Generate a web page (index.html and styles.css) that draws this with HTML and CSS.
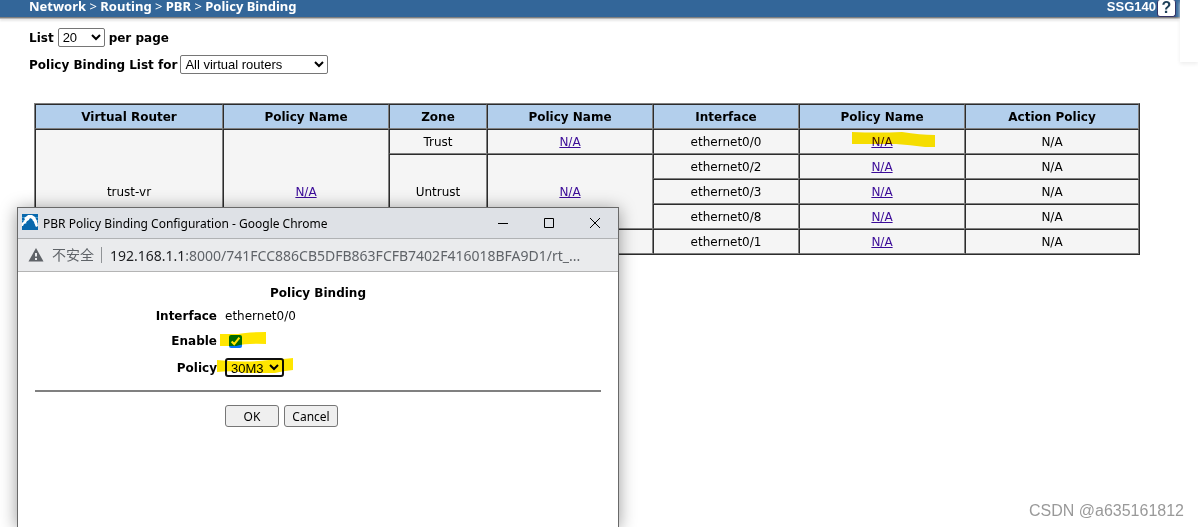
FILE: index.html
```html
<!DOCTYPE html>
<html lang="en">
<head>
<meta charset="utf-8">
<title>Policy Binding</title>
<link rel="stylesheet" href="styles.css">
</head>
<body>
<div class="page">
  <div class="console">
    <header class="topbar">
      <nav class="breadcrumb">Network <i>&gt;</i> Routing <i>&gt;</i> PBR <i>&gt;</i> Policy Binding</nav>
      <div class="device">SSG140<button class="help" type="button" aria-label="Help">?</button></div>
    </header>
    <div class="filters">
      <div class="filter"><label for="count">List</label>
        <select id="count" class="select select-count"><option>20</option></select>
        <span>per page</span></div>
      <div class="filter"><label for="router">Policy Binding List for</label>
        <select id="router" class="select select-router"><option>All virtual routers</option></select></div>
    </div>
    <table class="bindings">
      <colgroup><col class="c-router"><col class="c-policy"><col class="c-zone"><col class="c-policy"><col class="c-interface"><col class="c-policy"><col></colgroup>
      <thead>
        <tr><th>Virtual Router</th><th>Policy Name</th><th>Zone</th><th>Policy Name</th><th>Interface</th><th>Policy Name</th><th>Action Policy</th></tr>
      </thead>
      <tbody>
        <tr><td rowspan="5">trust-vr</td><td rowspan="5"><a href="#">N/A</a></td><td>Trust</td><td><a href="#">N/A</a></td><td>ethernet0/0</td>
          <td class="marked"><a href="#">N/A</a><svg class="marker marker-cell" width="83" height="16" viewBox="0 0 83 16" aria-hidden="true"><path d="M0 0Q25 1 50 0Q68 3 83 3V15H73Q58 13 44 12H0Z"/></svg></td><td>N/A</td></tr>
        <tr><td rowspan="3">Untrust</td><td rowspan="3"><a href="#">N/A</a></td><td>ethernet0/2</td><td><a href="#">N/A</a></td><td>N/A</td></tr>
        <tr><td>ethernet0/3</td><td><a href="#">N/A</a></td><td>N/A</td></tr>
        <tr><td>ethernet0/8</td><td><a href="#">N/A</a></td><td>N/A</td></tr>
        <tr><td></td><td></td><td>ethernet0/1</td><td><a href="#">N/A</a></td><td>N/A</td></tr>
      </tbody>
    </table>
  </div>
  <aside class="rail"></aside>

  <section class="window" aria-label="PBR Policy Binding Configuration">
    <div class="titlebar">
      <svg class="favicon" width="16" height="16" viewBox="0 0 16 16" aria-hidden="true"><path fill="#0868ad" d="M0 0H16V16H0Z"/><path stroke="#3f9bd0" d="M0 3.500H16M0 6.500H16M0 9.500H16"/><path fill="#fff" d="M0 12V9L2 7L3 5L2 4L5 2L6 1H10L13 3L15 7L16 12L14 13L13 11L12 8L10 5L8 4L7 6L5 7L4 9L2 10L1 12Z"/><path fill="#0868ad" d="M4 16V11L5 8L7 6L8 5L10 6L12 9L13 12V16Z"/></svg>
      <span class="title">PBR Policy Binding Configuration - Google Chrome</span>
      <div class="controls">
        <button type="button" aria-label="Minimize"><svg width="12" height="12" viewBox="0 0 12 12"><path d="M1 6.500H11"/></svg></button>
        <button type="button" aria-label="Maximize"><svg width="12" height="12" viewBox="0 0 12 12"><path d="M1.500 1.500H10.500V10.500H1.500Z"/></svg></button>
        <button type="button" aria-label="Close"><svg width="12" height="12" viewBox="0 0 12 12"><path d="M1 1L11 11M11 1L1 11"/></svg></button>
      </div>
    </div>
    <div class="address">
      <svg width="16" height="14" viewBox="0 0 16 14" aria-hidden="true"><path fill="#5f6368" d="M8 0L15.500 13.500H.5Z"/><path fill="#eaebed" d="M7 5H9V8.500H7ZM7 10H9V12H7Z"/></svg>
      <span class="insecure" lang="zh">不安全</span>
      <span class="url"><b>192.168.1.1</b>:8000/741FCC886CB5DFB863FCFB7402F416018BFA9D1/rt_...</span>
    </div>
    <form class="dialog">
      <h1 class="heading">Policy Binding</h1>
      <div class="fields">
        <span class="name">Interface</span><span>ethernet0/0</span>
        <label class="name" for="enable">Enable</label>
        <span class="marked"><input class="check" id="enable" type="checkbox" checked><svg class="marker marker-check" width="46" height="14" viewBox="0 0 46 14" aria-hidden="true"><path d="M0 2H18Q26 0 46 0V12Q26 11 16 14H0Z"/></svg></span>
        <label class="name" for="policy">Policy</label>
        <span class="marked"><select class="select select-policy" id="policy"><option>30M3</option></select><svg class="marker marker-policy" width="76" height="16" viewBox="0 0 76 16" aria-hidden="true"><path d="M0 2Q30 5 52 2Q68 1 76 0V12Q66 13 58 15H28Q16 12 0 14Z"/></svg></span>
      </div>
      <hr class="rule">
      <div class="actions"><button class="btn" type="button">OK</button><button class="btn" type="button">Cancel</button></div>
    </form>
  </section>
  <div class="watermark">CSDN @a635161812</div>
</div>
</body>
</html>
```
FILE: styles.css
```css
* { box-sizing: border-box; }
body {
  margin: 0;
  background: #fff;
  color: #000;
  font: 12px/16px "DejaVu Sans", Verdana, sans-serif;
}
.page {
  position: relative;
  display: flex;
  min-height: 100vh;
  overflow: hidden;
}
.console { flex: 1; }
.rail {
  width: 18px;
  height: 62px;
  background: #fff;
  box-shadow: 0 2px 4px #eee;
}
.topbar {
  display: flex;
  justify-content: space-between;
  height: 17px;
  padding: 0 4px 0 29px;
  background: #336699;
  box-shadow: 0 1px 0 #808080, 0 2px 0 #b8b8b8, 0 4px 2px #e8e8e8;
  color: #fff;
  font-weight: bold;
}
.breadcrumb { font: bold 13px/13px "Noto Sans", sans-serif; }
.breadcrumb i { font-style: normal; font-weight: normal; }
.device {
  display: flex;
  font: bold 13px/13px "Liberation Sans", Arial, sans-serif;
}
.help {
  width: 19px;
  height: 17px;
  margin-left: 1px;
  padding: 0;
  border: 1px solid #336;
  border-top: 0;
  border-radius: 3px;
  background: #fff;
  color: #1d4058;
  font: bold 16px/16px "Liberation Sans", Arial, sans-serif;
}
.filters {
  display: flex;
  flex-direction: column;
  gap: 7px;
  padding: 11px 29px 28px;
  font-weight: bold;
}
.filter {
  display: flex;
  align-items: center;
  gap: 4px;
  height: 19px;
}
.filter + .filter { height: 21px; gap: 3px; }
.select {
  height: 19px;
  padding: 0;
  border: 1px solid #767676;
  border-radius: 2px;
  background: #fff;
  color: #000;
  font: 13px "Liberation Sans", Arial, sans-serif;
}
.select-count { width: 47px; }
.select-router { width: 148px; }
.bindings {
  width: calc(100% - 74px);
  margin-left: 34px;
  border: 1px solid;
  border-color: #808080 #2c2c2c #2c2c2c #808080;
  border-spacing: 0;
  table-layout: fixed;
  text-align: center;
}
.bindings th, .bindings td {
  height: 25px;
  padding: 0;
  border: 1px solid;
  border-color: #2c2c2c #808080 #808080 #2c2c2c;
  background: #f5f5f5;
}
.bindings th { background: #b3cfec; }
.bindings a { color: #3b0b98; }
.c-router { width: 188px; }
.c-policy { width: 166px; }
.c-zone { width: 98px; }
.c-interface { width: 146px; }
.marked { position: relative; }
.marker {
  position: absolute;
  fill: #ffe600;
  mix-blend-mode: multiply;
  pointer-events: none;
}
.marker-cell { left: 52px; top: 2px; }
.marker-check { left: -5px; top: 0; }
.marker-policy { left: -8px; top: 0; }
.window {
  position: absolute;
  top: 207px;
  bottom: 0;
  left: 17px;
  width: 602px;
  border: 1px solid #696969;
  border-bottom: 0;
  background: #fff;
  box-shadow: 0 2px 16px rgba(0, 0, 0, .4);
}
.titlebar {
  display: flex;
  align-items: center;
  height: 31px;
  padding-left: 4px;
  gap: 5px;
  border-bottom: 1px solid #b0b2b4;
  background: #dee1e6;
  font: 12px "Noto Sans", sans-serif;
}
.favicon { margin-bottom: 2px; }
.controls { display: flex; margin-left: auto; }
.controls button {
  display: grid;
  place-items: center;
  width: 46px;
  height: 28px;
  padding: 0;
  border: 0;
  background: none;
}
.controls path { fill: none; stroke: #000; }
.address {
  display: flex;
  align-items: center;
  height: 33px;
  padding-left: 10px;
  gap: 8px;
  border-bottom: 1px solid #b4b4b4;
  background: #eaebed;
  color: #5f6368;
  font: 14px "Noto Sans", "Noto Sans CJK SC", sans-serif;
  white-space: nowrap;
}
.insecure {
  padding-right: 7px;
  border-right: 1px solid #909396;
  line-height: 16px;
}
.url b { color: #202124; font-weight: normal; }
.dialog { padding: 13px 17px; }
.heading {
  margin: 0;
  font-size: 12px;
  line-height: 16px;
  text-align: center;
}
.fields {
  display: grid;
  grid-template-columns: 182px 1fr;
  grid-template-rows: 26px 24px 29px;
  align-items: center;
  column-gap: 8px;
  padding-top: 2px;
}
.name { text-align: right; font-weight: bold; }
.fields .marked { display: flex; }
.check {
  width: 13px;
  height: 13px;
  margin: 3px 4px;
  accent-color: #0075ff;
}
.select-policy {
  width: 59px;
  border: 2px solid #101010;
  border-radius: 3px;
}
.rule {
  height: 2px;
  margin: 8px 0 13px;
  border: 0;
  background: #808080;
}
.actions { display: flex; gap: 5px; padding-left: 190px; }
.btn {
  width: 54px;
  height: 22px;
  padding: 0;
  border: 1px solid #767676;
  border-radius: 3px;
  background: #efefef;
  color: #000;
  font: 12px "Noto Sans", sans-serif;
}
.watermark {
  position: absolute;
  right: 14px;
  bottom: 6px;
  color: #999;
  font: 16px/20px "Liberation Sans", Arial, sans-serif;
}
```
